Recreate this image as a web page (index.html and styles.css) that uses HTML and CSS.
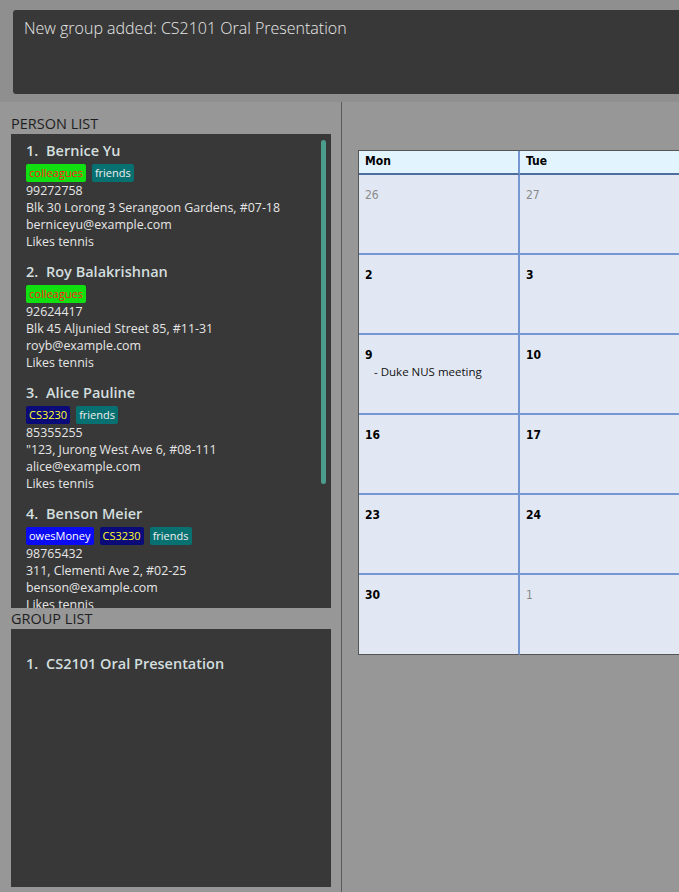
FILE: index.html
```html
<!DOCTYPE html>
<html>
<head>
<meta charset="utf-8">
<link rel="stylesheet" href="styles.css">
</head>
<body>
<div class="top">
  <div class="result">New group added: CS2101 Oral Presentation</div>
</div>
<div class="main">
  <div class="left">
    <div class="label">PERSON LIST</div>
    <div class="panel persons">
      <div class="scrollbar"></div>
      <div class="card">
        <div class="name"><span class="idx">1.</span>Bernice Yu</div>
        <div class="tags"><span class="tag colleagues">colleagues</span><span class="tag friends">friends</span></div>
        <div class="line">99272758</div>
        <div class="line">Blk 30 Lorong 3 Serangoon Gardens, #07-18</div>
        <div class="line">berniceyu@example.com</div>
        <div class="line">Likes tennis</div>
      </div>
      <div class="card">
        <div class="name"><span class="idx">2.</span>Roy Balakrishnan</div>
        <div class="tags"><span class="tag colleagues">colleagues</span></div>
        <div class="line">92624417</div>
        <div class="line">Blk 45 Aljunied Street 85, #11-31</div>
        <div class="line">royb@example.com</div>
        <div class="line">Likes tennis</div>
      </div>
      <div class="card">
        <div class="name"><span class="idx">3.</span>Alice Pauline</div>
        <div class="tags"><span class="tag cs">CS3230</span><span class="tag friends">friends</span></div>
        <div class="line">85355255</div>
        <div class="line">"123, Jurong West Ave 6, #08-111</div>
        <div class="line">alice@example.com</div>
        <div class="line">Likes tennis</div>
      </div>
      <div class="card">
        <div class="name"><span class="idx">4.</span>Benson Meier</div>
        <div class="tags"><span class="tag owes">owesMoney</span><span class="tag cs">CS3230</span><span class="tag friends">friends</span></div>
        <div class="line">98765432</div>
        <div class="line">311, Clementi Ave 2, #02-25</div>
        <div class="line">benson@example.com</div>
        <div class="line">Likes tennis</div>
      </div>
    </div>
    <div class="label glabel">GROUP LIST</div>
    <div class="panel groups">
      <div class="gname"><span class="gidx">1.</span>CS2101 Oral Presentation</div>
    </div>
  </div>
  <div class="divider"></div>
  <div class="right">
    <div class="calendar">
      <div class="hcell">Mon</div><div class="hcell">Tue</div>
      <div class="cell"><span class="day other">26</span></div><div class="cell"><span class="day other">27</span></div>
      <div class="cell"><span class="day">2</span></div><div class="cell"><span class="day">3</span></div>
      <div class="cell"><span class="day">9</span><div class="event">- Duke NUS meeting</div></div><div class="cell"><span class="day">10</span></div>
      <div class="cell"><span class="day">16</span></div><div class="cell"><span class="day">17</span></div>
      <div class="cell"><span class="day">23</span></div><div class="cell"><span class="day">24</span></div>
      <div class="cell"><span class="day">30</span></div><div class="cell"><span class="day other">1</span></div>
    </div>
  </div>
</div>
</body>
</html>
```
FILE: styles.css
```css
html, body {
  margin: 0;
  padding: 0;
  width: 679px;
  height: 892px;
  overflow: hidden;
  background: #979797;
  font-family: "Open Sans", "Noto Sans", sans-serif;
}
.top {
  height: 102px;
  box-sizing: border-box;
  padding: 10px 0 8px 13px;
  background: #8f8f8f;
}
.result {
  height: 84px;
  box-sizing: border-box;
  background: #383838;
  border-radius: 3px 0 0 3px;
  padding: 7px 11px;
  color: #e8e8e8;
  font-size: 16px;
  font-weight: 300;
  line-height: 22px;
}
.main {
  display: flex;
  height: 790px;
}
.left {
  width: 341px;
  box-sizing: border-box;
  padding-left: 11px;
  padding-right: 10px;
}
.label {
  height: 32px;
  box-sizing: border-box;
  padding-top: 13px;
  font-size: 14.5px;
  line-height: 17px;
  color: #1e1e1e;
}
.glabel {
  height: 21px;
  padding-top: 2px;
}
.panel {
  background: #383838;
  position: relative;
  overflow: hidden;
}
.persons {
  height: 474px;
}
.groups {
  height: 258px;
}
.scrollbar {
  position: absolute;
  left: 310px;
  top: 6px;
  width: 5px;
  height: 344px;
  border-radius: 3px;
  background: #4c9d8c;
}
.card {
  height: 121px;
  box-sizing: border-box;
  padding: 7px 0 0 15px;
}
.name {
  font-size: 14.5px;
  font-weight: 600;
  line-height: 20px;
  color: #d3dede;
}
.idx {
  display: inline-block;
  width: 20px;
}
.tags {
  display: flex;
  gap: 6px;
  margin-top: 3px;
  height: 18px;
}
.tag {
  font-size: 11px;
  line-height: 18px;
  padding: 0 3px;
  border-radius: 2px;
}
.colleagues { background: #10e010; color: #ff1a1a; }
.friends { background: #077171; color: #f0f0f0; }
.cs { background: #0a0a78; color: #ffff2a; }
.owes { background: #0a0af5; color: #ffffff; }
.line {
  font-size: 12.4px;
  line-height: 17px;
  color: #e6e6e6;
}
.gname {
  padding: 25px 0 0 15px;
  font-size: 14.5px;
  font-weight: 600;
  line-height: 20px;
  color: #d3dede;
}
.gidx {
  display: inline-block;
  width: 20px;
}
.divider {
  width: 1px;
  background: #5c5c5c;
}
.right {
  flex: 1;
  overflow: hidden;
  padding: 48px 0 0 16px;
}
.calendar {
  display: grid;
  grid-template-columns: 161px 161px;
  grid-template-rows: 24px repeat(6, 80px);
  width: 322px;
  border-top: 1px solid #555;
  border-left: 1px solid #555;
  background: #e1e8f4;
}
.hcell {
  background: #e2f5ff;
  border-right: 2px solid #7598d2;
  border-bottom: 2px solid #4e6e9e;
  font-family: "DejaVu Sans Condensed", "DejaVu Sans", sans-serif;
  font-weight: bold;
  font-size: 12px;
  line-height: 20px;
  padding-left: 6px;
  color: #000;
}
.cell {
  border-right: 2px solid #7598d2;
  border-bottom: 2px solid #7598d2;
  padding: 7px 0 0 6px;
}
.calendar > :nth-last-child(-n+2) {
  border-bottom-color: #555;
  border-bottom-width: 1px;
}
.day {
  font-family: "DejaVu Sans Condensed", "DejaVu Sans", sans-serif;
  font-weight: bold;
  font-size: 12px;
  line-height: 16px;
  color: #000;
}
.day.other {
  font-weight: normal;
  color: #8a8a8a;
}
.event {
  font-family: "Open Sans", sans-serif;
  font-size: 11.5px;
  line-height: 16px;
  padding-left: 9px;
  color: #111;
}
```
